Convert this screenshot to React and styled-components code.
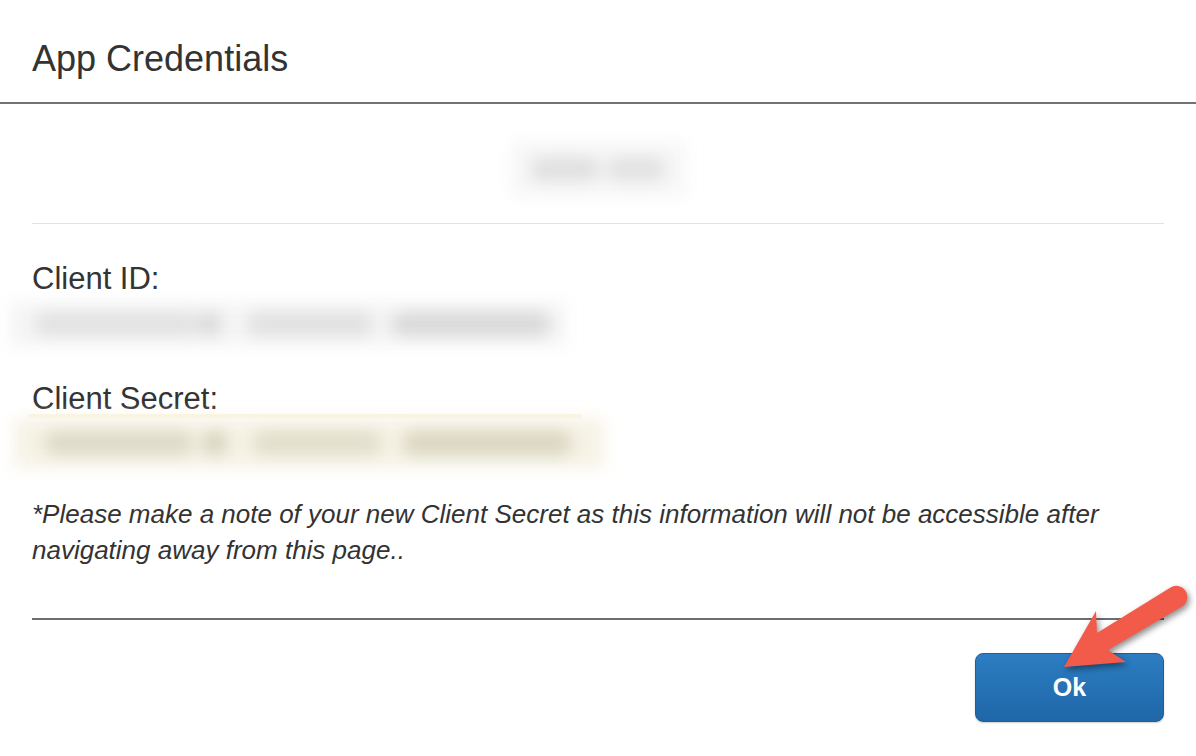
import React from 'react'
import styled, { createGlobalStyle } from 'styled-components'

const GlobalStyle = createGlobalStyle`
  html, body {
    margin: 0;
    padding: 0;
    background: #fff;
  }
  body {
    font-family: 'Liberation Sans', Arial, Helvetica, sans-serif;
    color: #333;
  }
`

const Page = styled.div`
  position: relative;
  width: 1196px;
  height: 756px;
  overflow: hidden;
  background: #fff;
`

const Header = styled.div`
  height: 104px;
  box-sizing: border-box;
  padding: 41px 32px 0;
  border-bottom: 2px solid #737373;
`

const Title = styled.h1`
  margin: 0;
  font-size: 36px;
  line-height: 36px;
  font-weight: 400;
  color: #333;
`

const Body = styled.div`
  display: flex;
  flex-direction: column;
  padding: 0 32px;
`

const NameArea = styled.div`
  height: 119px;
  display: flex;
  align-items: center;
  justify-content: center;
  border-bottom: 1px solid #e2e2e2;
`

const BlurPill = styled.div`
  width: 175px;
  height: 56px;
  background: #f7f7f7;
  display: flex;
  align-items: center;
  justify-content: center;
  gap: 6px;
  filter: blur(8px);
  margin-top: 10px;
`

const Label = styled.div`
  font-size: 31px;
  line-height: 31px;
  color: #333;
  margin-top: ${(p) => p.$top}px;
`

const Redacted = styled.div`
  display: flex;
  align-items: center;
  height: ${(p) => p.$height}px;
  width: ${(p) => p.$width}px;
  margin-left: ${(p) => p.$left}px;
  margin-top: ${(p) => p.$top}px;
  box-sizing: border-box;
  background: ${(p) => p.$bg};
  filter: blur(8px);
`

const Blob = styled.span`
  display: block;
  flex: none;
  height: ${(p) => p.$h || 24}px;
  width: ${(p) => p.$w}px;
  margin-left: ${(p) => p.$gap || 0}px;
  border-radius: 12px;
  background: ${(p) => p.$c};
`

const YellowStrip = styled.div`
  height: 4px;
  width: 554px;
  margin-left: -4px;
  background: #fbf6df;
`

const Note = styled.p`
  margin: 28px 0 0;
  font-size: 26px;
  line-height: 36px;
  font-style: italic;
  color: #333;
`

const Rule = styled.div`
  margin-top: 50px;
  height: 2px;
  background: #6e6e6e;
`

const Footer = styled.div`
  display: flex;
  justify-content: flex-end;
  padding-top: 33px;
`

const OkButton = styled.button`
  width: 189px;
  height: 69px;
  border-radius: 8px;
  border: 1px solid #1c5f9c;
  background: linear-gradient(#2c7dc2, #1f67a8);
  color: #fff;
  font-family: 'Liberation Sans', Arial, sans-serif;
  font-weight: 700;
  font-size: 25px;
  box-shadow: 0 1px 2px rgba(0, 0, 0, 0.2);
  cursor: pointer;
`

const ArrowSvg = styled.svg`
  position: absolute;
  left: 1040px;
  top: 576px;
  width: 156px;
  height: 106px;
  filter: drop-shadow(2px 3px 3px rgba(0, 0, 0, 0.45));
  pointer-events: none;
`

const Arrow = () => (
  <ArrowSvg viewBox="1040 576 156 106">
    <path
      d="M1064 667 L1126 662 L1108 650 L1182 606.5 A11 11 0 0 0 1170.5 587.5 L1097 633 L1096 611 Z"
      fill="#f25a4a"
    />
  </ArrowSvg>
)

const clientIdBlobs = [
  { w: 165, c: '#e2e2e2', gap: 24 },
  { w: 22, c: '#d8d8d8', gap: 0 },
  { w: 126, c: '#e1e1e1', gap: 26 },
  { w: 160, c: '#d9d9d9', gap: 18 },
]

const secretBlobs = [
  { w: 150, c: '#dedac8', gap: 30 },
  { w: 26, c: '#d7d3bf', gap: 8 },
  { w: 130, c: '#e2decc', gap: 24 },
  { w: 170, c: '#dad6c1', gap: 20 },
]

export default function App() {
  return (
    <Page>
      <GlobalStyle />
      <Header>
        <Title>App Credentials</Title>
      </Header>
      <Body>
        <NameArea>
          <BlurPill>
            <Blob $w={70} $c="#e0e0e0" />
            <Blob $w={60} $c="#e2e2e2" />
          </BlurPill>
        </NameArea>
        <Label $top={39}>Client ID:</Label>
        <Redacted $height={44} $width={556} $left={-22} $top={8} $bg="#f5f5f5">
          {clientIdBlobs.map((b, i) => (
            <Blob key={i} $w={b.w} $c={b.c} $gap={b.gap} />
          ))}
        </Redacted>
        <Label $top={37}>Client Secret:</Label>
        <YellowStrip />
        <Redacted $height={50} $width={590} $left={-18} $top={0} $bg="#f6f3e6">
          {secretBlobs.map((b, i) => (
            <Blob key={i} $w={b.w} $c={b.c} $gap={b.gap} />
          ))}
        </Redacted>
        <Note>
          *Please make a note of your new Client Secret as this information will not be accessible after
          navigating away from this page..
        </Note>
        <Rule />
        <Footer>
          <OkButton>Ok</OkButton>
        </Footer>
      </Body>
      <Arrow />
    </Page>
  )
}
